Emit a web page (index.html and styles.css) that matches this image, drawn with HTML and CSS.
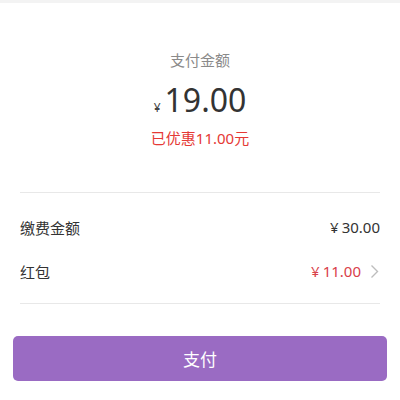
FILE: index.html
```html
<!DOCTYPE html>
<html lang="zh-CN">
<head>
<meta charset="utf-8">
<link rel="stylesheet" href="styles.css">
</head>
<body>
<div class="topbar"></div>
<section class="summary">
  <div class="label">支付金额</div>
  <div class="amount"><span class="yen">¥</span><span class="num">19.00</span></div>
  <div class="discount">已优惠11.00元</div>
</section>
<section class="details">
  <div class="row">
    <span class="name">缴费金额</span>
    <span class="value"><span class="cur">¥</span>30.00</span>
  </div>
  <div class="row">
    <span class="name">红包</span>
    <span class="value red"><span class="cur">¥</span>11.00<svg class="chev" width="9" height="15" viewBox="0 0 9 15"><polyline points="1.5,1.5 7.5,7.5 1.5,13.5" fill="none" stroke="#bdbdbd" stroke-width="1.4"/></svg></span>
  </div>
</section>
<div class="actions">
  <button class="pay">支付</button>
</div>
</body>
</html>
```
FILE: styles.css
```css
html, body {
  margin: 0;
  padding: 0;
  background: #fff;
  font-family: "Noto Sans", "Noto Sans CJK SC", sans-serif;
  color: #333;
}
.topbar {
  height: 3px;
  background: #f3f3f3;
}
.summary {
  display: flex;
  flex-direction: column;
  align-items: center;
  padding-top: 47px;
}
.label {
  font-size: 15px;
  line-height: 20px;
  color: #8a8a8a;
}
.amount {
  display: flex;
  align-items: baseline;
  height: 40px;
  line-height: 40px;
  margin-top: 10px;
}
.yen {
  font-size: 12px;
  margin-right: 4px;
  color: #444;
}
.num {
  font-size: 32px;
  color: #333;
}
.discount {
  margin-top: 8px;
  font-size: 15px;
  line-height: 20px;
  color: #e53935;
}
.details {
  margin: 44px 20px 0;
  border-top: 1px solid #e8e8e8;
  border-bottom: 1px solid #e8e8e8;
  padding: 12px 0 10px;
}
.row {
  height: 44px;
  display: flex;
  align-items: center;
  justify-content: space-between;
  font-size: 15px;
}
.value {
  display: flex;
  align-items: center;
  font-size: 15px;
  color: #333;
}
.cur {
  margin-right: 3px;
}
.value.red {
  color: #d9404a;
}
.chev {
  margin-left: 9px;
  margin-right: 1px;
}
.actions {
  padding: 32px 13px 0;
}
.pay {
  width: 100%;
  height: 45px;
  border: none;
  border-radius: 5px;
  background: #9a6bc3;
  color: #fff;
  font-family: "Noto Sans", "Noto Sans CJK SC", sans-serif;
  font-size: 17px;
}
```
